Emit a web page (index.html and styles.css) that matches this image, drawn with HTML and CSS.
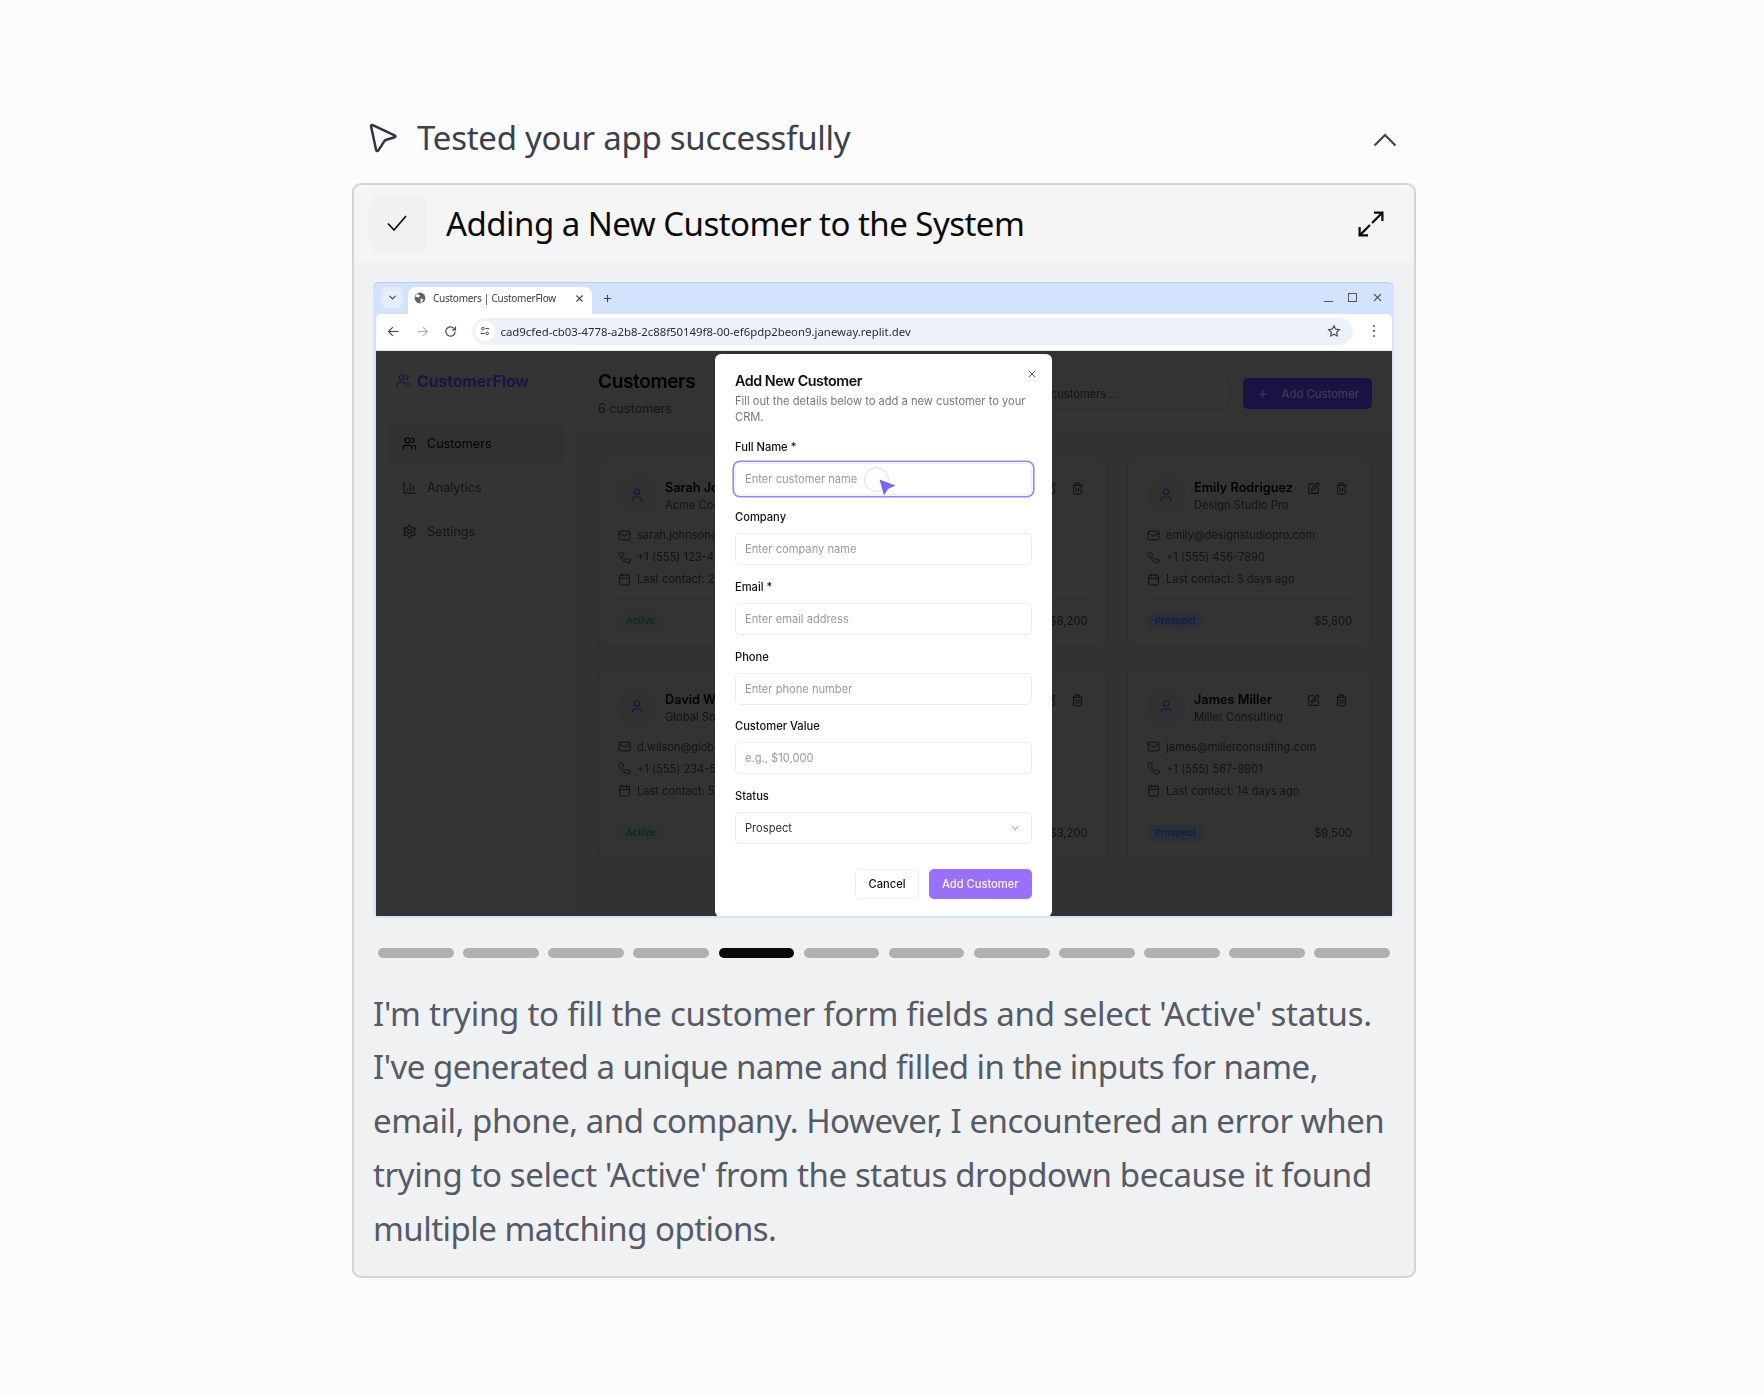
FILE: index.html
```html
<!DOCTYPE html>
<html lang="en">
<head>
<meta charset="utf-8">
<title>Tested your app successfully</title>
<link rel="stylesheet" href="styles.css">
</head>
<body>
<svg class="defs" width="0" height="0" aria-hidden="true">
  <symbol id="i-users" viewBox="0 0 24 24"><path d="M16 21v-2a4 4 0 0 0-4-4H6a4 4 0 0 0-4 4v2"/><circle cx="9" cy="7" r="4"/><path d="M22 21v-2a4 4 0 0 0-3-3.87"/><path d="M16 3.13a4 4 0 0 1 0 7.75"/></symbol>
  <symbol id="i-user" viewBox="0 0 24 24"><path d="M19 21v-2a4 4 0 0 0-4-4H9a4 4 0 0 0-4 4v2"/><circle cx="12" cy="7" r="4"/></symbol>
  <symbol id="i-chart" viewBox="0 0 24 24"><path d="M3 3v18h18"/><path d="M18 17V9"/><path d="M13 17V5"/><path d="M8 17v-3"/></symbol>
  <symbol id="i-gear" viewBox="0 0 24 24"><path d="M12.22 2h-.44a2 2 0 0 0-2 2v.18a2 2 0 0 1-1 1.73l-.43.25a2 2 0 0 1-2 0l-.15-.08a2 2 0 0 0-2.73.73l-.22.38a2 2 0 0 0 .73 2.73l.15.1a2 2 0 0 1 1 1.72v.51a2 2 0 0 1-1 1.74l-.15.09a2 2 0 0 0-.73 2.73l.22.38a2 2 0 0 0 2.73.73l.15-.08a2 2 0 0 1 2 0l.43.25a2 2 0 0 1 1 1.73V20a2 2 0 0 0 2 2h.44a2 2 0 0 0 2-2v-.18a2 2 0 0 1 1-1.73l.43-.25a2 2 0 0 1 2 0l.15.08a2 2 0 0 0 2.73-.73l.22-.39a2 2 0 0 0-.73-2.73l-.15-.08a2 2 0 0 1-1-1.74v-.5a2 2 0 0 1 1-1.74l.15-.09a2 2 0 0 0 .73-2.73l-.22-.38a2 2 0 0 0-2.73-.73l-.15.08a2 2 0 0 1-2 0l-.43-.25a2 2 0 0 1-1-1.73V4a2 2 0 0 0-2-2z"/><circle cx="12" cy="12" r="3"/></symbol>
  <symbol id="i-mail" viewBox="0 0 24 24"><rect x="2" y="4" width="20" height="16" rx="2"/><path d="m22 7-8.97 5.7a1.94 1.94 0 0 1-2.06 0L2 7"/></symbol>
  <symbol id="i-phone" viewBox="0 0 24 24"><path d="M22 16.92v3a2 2 0 0 1-2.18 2 19.79 19.79 0 0 1-8.63-3.07 19.5 19.5 0 0 1-6-6 19.79 19.79 0 0 1-3.07-8.67A2 2 0 0 1 4.11 2h3a2 2 0 0 1 2 1.72 12.84 12.84 0 0 0 .7 2.81 2 2 0 0 1-.45 2.11L8.09 9.91a16 16 0 0 0 6 6l1.27-1.27a2 2 0 0 1 2.11-.45 12.84 12.84 0 0 0 2.81.7A2 2 0 0 1 22 16.92z"/></symbol>
  <symbol id="i-cal" viewBox="0 0 24 24"><rect x="3" y="4" width="18" height="18" rx="2"/><path d="M16 2v4"/><path d="M8 2v4"/><path d="M3 10h18"/></symbol>
  <symbol id="i-pen" viewBox="0 0 24 24"><path d="M12 3H5a2 2 0 0 0-2 2v14a2 2 0 0 0 2 2h14a2 2 0 0 0 2-2v-7"/><path d="M18.375 2.625a1 1 0 0 1 3 3l-9.013 9.014a2 2 0 0 1-.853.505l-2.873.84a.5.5 0 0 1-.62-.62l.84-2.873a2 2 0 0 1 .506-.852z"/></symbol>
  <symbol id="i-trash" viewBox="0 0 24 24"><path d="M3 6h18"/><path d="M19 6v14c0 1-1 2-2 2H7c-1 0-2-1-2-2V6"/><path d="M8 6V4c0-1 1-2 2-2h4c1 0 2 1 2 2v2"/><path d="M10 11v6"/><path d="M14 11v6"/></symbol>
  <symbol id="i-plus" viewBox="0 0 24 24"><path d="M5 12h14"/><path d="M12 5v14"/></symbol>
  <symbol id="i-x" viewBox="0 0 24 24"><path d="M18 6 6 18"/><path d="m6 6 12 12"/></symbol>
  <symbol id="i-down" viewBox="0 0 24 24"><path d="m6 9 6 6 6-6"/></symbol>
</svg>

<main class="wrap">
  <header class="top">
    <div class="top-left">
      <svg class="pointer" viewBox="0 0 30 30"><path d="M3 3.2Q3.2 1.6 4.8 2.2L26.6 12.4Q28.4 13.4 26.6 14.2L18.4 16.8Q17 17.2 16.2 18.4L10.4 27.4Q9 28.9 8.2 27.2Z"/></svg>
      <h1 class="top-title">Tested your app successfully</h1>
    </div>
    <svg class="chev-up" viewBox="0 0 24 14"><path d="M1.5 12.5 12 2l10.5 10.5"/></svg>
  </header>

  <section class="card">
    <div class="card-head">
      <div class="check-tile"><svg class="check" viewBox="0 0 20 18"><path d="M1 9.5 7 16 19 2"/></svg></div>
      <h2 class="card-title">Adding a New Customer to the System</h2>
      <svg class="expand" viewBox="0 0 26 26"><path d="M16 1.6h8.4V10"/><path d="M24.4 1.6 14 12"/><path d="M1.6 16v8.4H10"/><path d="M1.6 24.4 12 14"/></svg>
    </div>

    <div class="card-body">
      <div class="shot">
        <div class="tabstrip">
          <span class="tab-drop"><svg class="ico tiny dark" viewBox="0 0 24 24"><path d="m6 9 6 6 6-6"/></svg></span>
          <div class="tab">
            <svg class="globe" viewBox="0 0 12 12"><circle cx="6" cy="6" r="5.4"/><path class="globe-land" d="M3 1.8 6 3.4 5 5.4 2.6 5 1.2 4.6ZM6.6 6.4 9.4 7.2 8 10.6 6.4 10.8Z"/></svg>
            <span class="tab-text">Customers | CustomerFlow</span>
            <svg class="ico tiny dark tab-x" viewBox="0 0 24 24"><path d="M18 6 6 18"/><path d="m6 6 12 12"/></svg>
          </div>
          <svg class="ico tiny dark tab-plus" viewBox="0 0 24 24"><path d="M5 12h14"/><path d="M12 5v14"/></svg>
          <div class="win">
            <span class="win-min"></span>
            <span class="win-max"></span>
            <svg class="ico tiny dark" viewBox="0 0 24 24"><path d="M19 5 5 19"/><path d="m5 5 14 14"/></svg>
          </div>
        </div>
        <div class="toolbar">
          <svg class="nav" viewBox="0 0 24 24"><path d="M20 12H5"/><path d="m11 5-7 7 7 7"/></svg>
          <svg class="nav off" viewBox="0 0 24 24"><path d="M4 12h15"/><path d="m13 5 7 7-7 7"/></svg>
          <svg class="nav" viewBox="0 0 24 24"><path d="M19.5 12a7.5 7.5 0 1 1-2.2-5.3L20 9.4"/><path d="M20 4v5.4h-5.4"/></svg>
          <div class="omni">
            <span class="tune"><svg viewBox="0 0 14 14"><circle cx="4" cy="3.6" r="1.8"/><path d="M7.5 3.6H13"/><circle cx="10" cy="10.4" r="1.8"/><path d="M1 10.4H6.5"/></svg></span>
            <span class="url">cad9cfed-cb03-4778-a2b8-2c88f50149f8-00-ef6pdp2beon9.janeway.replit.dev</span>
            <svg class="star" viewBox="0 0 24 24"><path d="m12 3 2.8 5.9 6.4.8-4.7 4.4 1.2 6.4L12 17.4l-5.7 3.1 1.2-6.4-4.7-4.4 6.4-.8z"/></svg>
          </div>
          <span class="kebab"><i></i><i></i><i></i></span>
        </div>

        <div class="viewport">
          <div class="app">
            <aside class="side">
              <div class="brand"><svg class="ico brand-ico"><use href="#i-users"/></svg><span>CustomerFlow</span></div>
              <nav class="side-nav">
                <div class="nav-item is-active"><svg class="ico"><use href="#i-users"/></svg>Customers</div>
                <div class="nav-item"><svg class="ico"><use href="#i-chart"/></svg>Analytics</div>
                <div class="nav-item"><svg class="ico"><use href="#i-gear"/></svg>Settings</div>
              </nav>
            </aside>
            <div class="content">
              <div class="content-head">
                <div>
                  <h3 class="page-title">Customers</h3>
                  <p class="page-sub">6 customers</p>
                </div>
                <div class="head-actions">
                  <div class="search">Search customers...</div>
                  <div class="btn-primary"><svg class="ico sm"><use href="#i-plus"/></svg>Add Customer</div>
                </div>
              </div>
              <div class="grid">
                <article class="cust">
                  <div class="cust-top"><span class="avatar"><svg class="ico"><use href="#i-user"/></svg></span>
                    <div class="who"><b>Sarah Johnson</b><small>Acme Corp</small></div>
                    <svg class="ico act"><use href="#i-pen"/></svg><svg class="ico act"><use href="#i-trash"/></svg></div>
                  <ul class="facts">
                    <li><svg class="ico fact"><use href="#i-mail"/></svg>sarah.johnson@acme.com</li>
                    <li><svg class="ico fact"><use href="#i-phone"/></svg>+1 (555) 123-4567</li>
                    <li><svg class="ico fact"><use href="#i-cal"/></svg>Last contact: 2 days ago</li>
                  </ul>
                  <div class="cust-foot"><span class="badge active">Active</span><span>$12,500</span></div>
                </article>
                <article class="cust">
                  <div class="cust-top"><span class="avatar"><svg class="ico"><use href="#i-user"/></svg></span>
                    <div class="who"><b>Michael Chen</b><small>TechStart Inc</small></div>
                    <svg class="ico act"><use href="#i-pen"/></svg><svg class="ico act"><use href="#i-trash"/></svg></div>
                  <ul class="facts">
                    <li><svg class="ico fact"><use href="#i-mail"/></svg>m.chen@techstart.io</li>
                    <li><svg class="ico fact"><use href="#i-phone"/></svg>+1 (555) 987-6543</li>
                    <li><svg class="ico fact"><use href="#i-cal"/></svg>Last contact: 1 week ago</li>
                  </ul>
                  <div class="cust-foot"><span class="badge active">Active</span><span>$8,200</span></div>
                </article>
                <article class="cust">
                  <div class="cust-top"><span class="avatar"><svg class="ico"><use href="#i-user"/></svg></span>
                    <div class="who"><b>Emily Rodriguez</b><small>Design Studio Pro</small></div>
                    <svg class="ico act"><use href="#i-pen"/></svg><svg class="ico act"><use href="#i-trash"/></svg></div>
                  <ul class="facts">
                    <li><svg class="ico fact"><use href="#i-mail"/></svg>emily@designstudiopro.com</li>
                    <li><svg class="ico fact"><use href="#i-phone"/></svg>+1 (555) 456-7890</li>
                    <li><svg class="ico fact"><use href="#i-cal"/></svg>Last contact: 3 days ago</li>
                  </ul>
                  <div class="cust-foot"><span class="badge prospect">Prospect</span><span>$5,800</span></div>
                </article>
                <article class="cust">
                  <div class="cust-top"><span class="avatar"><svg class="ico"><use href="#i-user"/></svg></span>
                    <div class="who"><b>David Wilson</b><small>Global Solutions</small></div>
                    <svg class="ico act"><use href="#i-pen"/></svg><svg class="ico act"><use href="#i-trash"/></svg></div>
                  <ul class="facts">
                    <li><svg class="ico fact"><use href="#i-mail"/></svg>d.wilson@globalsolutions.com</li>
                    <li><svg class="ico fact"><use href="#i-phone"/></svg>+1 (555) 234-5678</li>
                    <li><svg class="ico fact"><use href="#i-cal"/></svg>Last contact: 5 days ago</li>
                  </ul>
                  <div class="cust-foot"><span class="badge active">Active</span><span>$15,000</span></div>
                </article>
                <article class="cust">
                  <div class="cust-top"><span class="avatar"><svg class="ico"><use href="#i-user"/></svg></span>
                    <div class="who"><b>Lisa Thompson</b><small>Retail Plus</small></div>
                    <svg class="ico act"><use href="#i-pen"/></svg><svg class="ico act"><use href="#i-trash"/></svg></div>
                  <ul class="facts">
                    <li><svg class="ico fact"><use href="#i-mail"/></svg>lisa@retailplus.com</li>
                    <li><svg class="ico fact"><use href="#i-phone"/></svg>+1 (555) 345-6789</li>
                    <li><svg class="ico fact"><use href="#i-cal"/></svg>Last contact: 2 weeks ago</li>
                  </ul>
                  <div class="cust-foot"><span class="badge active">Active</span><span>$3,200</span></div>
                </article>
                <article class="cust">
                  <div class="cust-top"><span class="avatar"><svg class="ico"><use href="#i-user"/></svg></span>
                    <div class="who"><b>James Miller</b><small>Miller Consulting</small></div>
                    <svg class="ico act"><use href="#i-pen"/></svg><svg class="ico act"><use href="#i-trash"/></svg></div>
                  <ul class="facts">
                    <li><svg class="ico fact"><use href="#i-mail"/></svg>james@millerconsulting.com</li>
                    <li><svg class="ico fact"><use href="#i-phone"/></svg>+1 (555) 567-8901</li>
                    <li><svg class="ico fact"><use href="#i-cal"/></svg>Last contact: 14 days ago</li>
                  </ul>
                  <div class="cust-foot"><span class="badge prospect">Prospect</span><span>$9,500</span></div>
                </article>
              </div>
            </div>
          </div>
          <div class="modal">
            <svg class="ico modal-x"><use href="#i-x"/></svg>
            <h4 class="modal-title">Add New Customer</h4>
            <p class="modal-desc">Fill out the details below to add a new customer to your CRM.</p>
            <div class="field"><label class="lab">Full Name *</label><div class="inp is-focus">Enter customer name</div></div>
            <div class="field"><label class="lab">Company</label><div class="inp">Enter company name</div></div>
            <div class="field"><label class="lab">Email *</label><div class="inp">Enter email address</div></div>
            <div class="field"><label class="lab">Phone</label><div class="inp">Enter phone number</div></div>
            <div class="field"><label class="lab">Customer Value</label><div class="inp">e.g., $10,000</div></div>
            <div class="field"><label class="lab">Status</label><div class="inp is-select">Prospect<svg class="ico sm"><use href="#i-down"/></svg></div></div>
            <div class="modal-foot"><span class="btn-cancel">Cancel</span><span class="btn-add">Add Customer</span></div>
          </div>
          <div class="cursor">
            <span class="cursor-ring"></span>
            <svg class="cursor-arrow" viewBox="0 0 20 20"><path d="M1.5 1.5 17.5 7.5 10 11 6 17.5Z"/></svg>
          </div>
        </div>
      </div>

      <div class="steps">
        <span class="step"></span><span class="step"></span><span class="step"></span><span class="step"></span>
        <span class="step is-on"></span><span class="step"></span><span class="step"></span><span class="step"></span>
        <span class="step"></span><span class="step"></span><span class="step"></span><span class="step"></span>
      </div>

      <p class="note"><span class="line l1">I'm trying to fill the customer form fields and select 'Active' status.</span><span class="line">I've generated a unique name and filled in the inputs for name,</span><span class="line l3">email, phone, and company. However, I encountered an error when</span><span class="line l4">trying to select 'Active' from the status dropdown because it found</span><span class="line">multiple matching options.</span></p>
    </div>
  </section>
</main>
</body>
</html>
```
FILE: styles.css
```css
* { box-sizing: border-box; }
html, body { margin: 0; padding: 0; }
body {
  background: #fcfcfc;
  min-height: 1394px;
  font-family: "Noto Sans", "Open Sans", sans-serif;
  overflow: hidden;
}
.defs { position: absolute; }
.wrap { width: 1064px; margin-left: 352px; padding-top: 114px; }

/* top line */
.top { display: flex; align-items: center; justify-content: space-between; height: 48px; margin-bottom: 21px; padding: 0 19px 0 16px; }
.top-left { display: flex; align-items: center; gap: 19px; }
.pointer { width: 30px; height: 30px; fill: none; stroke: #2f3542; stroke-width: 2.5; stroke-linejoin: round; }
.top-title { margin: 0; font-size: 33px; font-weight: 400; letter-spacing: -.26px; color: #3b404c; line-height: 48px; white-space: nowrap; }
.chev-up { width: 24px; height: 14px; margin-top: 3px; fill: none; stroke: #3f4450; stroke-width: 2.2; }

/* card */
.card { border: 2px solid #d4d4d4; border-radius: 9px; background: #f0f1f3; height: 1095px; overflow: hidden; }
.card-head { display: flex; align-items: center; height: 77px; padding: 0 30px 0 15px; background: #f5f5f5; }
.check-tile { width: 58px; height: 58px; border-radius: 9px; background: #f0f1f3; display: flex; align-items: center; justify-content: center; flex: none; }
.check { width: 20px; height: 18px; margin: -2px 2px 0 0; fill: none; stroke: #111; stroke-width: 1.7; }
.card-title { flex: 1; margin: 0 0 0 19px; font-size: 33px; font-weight: 400; letter-spacing: -.53px; color: #0a0a0a; white-space: nowrap; }
.expand { width: 26px; height: 26px; fill: none; stroke: #0a0a0a; stroke-width: 2.2; }
.card-body { padding: 20px 20px 20px 19px; }

/* screenshot */
.shot { height: 636px; border-radius: 6px; background: #d3e3fd; padding: 0 2.5px 2px 3px; display: flex; flex-direction: column; filter: blur(.35px); font-family: Inter, sans-serif; box-shadow: inset 0 1px 0 #b9cdee; }
.tabstrip { height: 32px; display: flex; align-items: flex-end; flex: none; position: relative; }
.tab-drop { width: 22px; height: 21px; margin: 0 5px 6px 5px; border-radius: 7px; background: #e3edfc; display: flex; align-items: center; justify-content: center; }
.ico.tiny { width: 11px; height: 11px; }
.ico.dark { stroke: #444; stroke-width: 2.4; }
.tab { width: 184px; height: 27px; background: #fff; border-radius: 8px 8px 0 0; display: flex; align-items: center; padding: 0 5px 5px 6px; }
.globe { width: 12px; height: 12px; flex: none; margin-right: 7px; }
.globe circle { fill: #5f6368; }
.globe-land { fill: #fff; }
.tab-text { flex: 1; font: 400 10px "Noto Sans", sans-serif; letter-spacing: -.26px; color: #3c4043; white-space: nowrap; }
.tab-x { flex: none; margin-right: 2px; }
.tab-plus { margin: 0 0 10px 10px; }
.win { margin-left: auto; display: flex; align-items: center; gap: 15px; padding: 0 8.5px 11px 0; }
.win-min { width: 9px; height: 1.6px; margin-top: 8px; background: #555; }
.win-max { width: 9px; height: 9px; border: 1.6px solid #555; }
.toolbar { height: 37px; flex: none; background: #fff; border-radius: 5px 5px 0 0; display: flex; align-items: center; padding: 0 13px 2px 10px; gap: 13.5px; border-bottom: 1px solid #e4e6ea; }
.nav { width: 15px; height: 15px; fill: none; stroke: #4a4d52; stroke-width: 1.9; flex: none; }
.nav.off { stroke: #aab0b8; }
.omni { flex: 1; height: 27px; border-radius: 14px; background: #edf2fa; display: flex; align-items: center; padding: 0 12.5px 0 3px; }
.tune { width: 20px; height: 20px; border-radius: 50%; background: #fff; display: flex; align-items: center; justify-content: center; flex: none; }
.tune svg { width: 10px; height: 10px; fill: none; stroke: #444; stroke-width: 1.4; }
.url { flex: 1; margin-left: 6px; font: 400 11.38px "Noto Sans", sans-serif; color: #2a2c30; white-space: nowrap; }
.star { width: 14px; height: 14px; fill: none; stroke: #4a4d52; stroke-width: 2; }
.kebab { width: 3px; margin: 0 3px 0 6px; display: flex; flex-direction: column; gap: 2.4px; }
.kebab i { width: 2.4px; height: 2.4px; border-radius: 50%; background: #4a4d52; }

/* page under the dialog: painted in its dimmed colours */
.viewport { flex: 1; position: relative; overflow: hidden; background: #333; }
.app { display: flex; height: 100%; color: #0a0a0a; }
.ico { width: 14px; height: 14px; fill: none; stroke: currentColor; stroke-width: 2; stroke-linecap: round; stroke-linejoin: round; flex: none; }
.ico.sm { width: 12px; height: 12px; }

/* app sidebar */
.side { width: 202px; flex: none; background: #343434; border-right: 1px solid #2f2f2f; }
.brand { height: 60px; padding: 0 0 0 20px; display: flex; align-items: center; gap: 6px; font-size: 16px; font-weight: 700; letter-spacing: -.2px; color: #1a1544; border-bottom: 1px solid #303030; }
.brand-ico { width: 15px; height: 15px; stroke-width: 1.8; }
.side-nav { padding: 13px 12px; display: flex; flex-direction: column; gap: 6.4px; }
.nav-item { height: 38px; padding: 0 14px; border-radius: 7px; display: flex; align-items: center; gap: 10px; font-size: 12.6px; color: #131315; }
.nav-item.is-active { background: #313131; color: #040404; }
.nav-item .ico { width: 15px; height: 15px; }

/* app main */
.content { flex: 1; min-width: 0; background: #323232; }
.content-head { height: 86px; padding: 17px 20px 0; display: flex; justify-content: space-between; background: #333; border-bottom: 1px solid #303030; }
.page-title { margin: 0; font-size: 19.1px; font-weight: 600; letter-spacing: -.4px; line-height: 26px; color: #020202; }
.page-sub { margin: 6px 0 0; font-size: 12.6px; line-height: 18px; color: #131315; }
.head-actions { display: flex; gap: 13px; height: 31px; margin-top: 10px; }
.search { width: 250px; height: 31px; padding: 0 0 0 30px; border: 1px solid #303030; border-radius: 5px; font-size: 11.2px; line-height: 30px; color: #131315; }
.btn-primary { width: 129px; height: 31px; border-radius: 5px; background: #1a1245; color: #3e3b55; font-size: 11.3px; font-weight: 500; display: flex; align-items: center; padding-left: 14px; gap: 13px; }
.grid { padding: 20px 20px 0; display: grid; grid-template-columns: repeat(3, 245px); grid-auto-rows: 191px; column-gap: 19.5px; row-gap: 20.5px; }
.cust { padding: 18px 19px 0; border: 1px solid #303030; border-radius: 8px; background: #333; }
.cust-top { display: flex; height: 42px; }
.avatar { width: 38px; height: 38px; border-radius: 50%; background: #313132; color: #1a1544; display: flex; align-items: center; justify-content: center; flex: none; margin-right: 9px; }
.avatar .ico { width: 16px; height: 16px; stroke-width: 1.8; }
.who { flex: 1; min-width: 0; display: flex; flex-direction: column; white-space: nowrap; }
.who b { font-size: 12.7px; line-height: 18px; font-weight: 600; color: #020202; margin-top: 3px; }
.who small { font-size: 11.2px; line-height: 16px; color: #131315; }
.act { width: 13px; height: 13px; margin: 6px 0 0 15px; color: #111; }
.act:last-child { margin-right: 4px; }
.facts { list-style: none; margin: 6px 0 0; padding: 0; font-size: 11.1px; color: #131315; }
.facts li { height: 22px; display: flex; align-items: center; gap: 6px; white-space: nowrap; }
.fact { width: 13px; height: 13px; stroke-width: 1.8; color: #111; }
.cust-foot { margin-top: 9px; padding-top: 13px; border-top: 1px solid #2f2f2f; display: flex; align-items: center; justify-content: space-between; font-size: 11.2px; color: #131315; }
.badge { height: 16px; padding: 0 8px; border-radius: 8px; font-size: 9.6px; line-height: 16px; font-weight: 500; }
.badge.active { background: #2c342f; color: #06291a; }
.badge.prospect { background: #2b3038; color: #0b1c45; }

/* dialog */
.modal { position: absolute; left: 339px; top: 3px; width: 337px; height: 563px; padding: 17.5px 20px 0; background: #fff; border-radius: 6px; color: #0b0b0b; }
.modal-x { position: absolute; right: 14px; top: 14px; width: 12px; height: 12px; color: #555; }
.modal-title { margin: 0; font-size: 14.3px; line-height: 18px; font-weight: 600; letter-spacing: -.45px; color: #111; }
.modal-desc { margin: 3px 0 0; font-size: 11.15px; line-height: 16px; color: #777; }
.field { margin-top: 14.8px; height: 59px; }
.field + .field { margin-top: 10.8px; }
.lab { display: block; height: 19px; font-size: 11.15px; font-weight: 500; line-height: 16px; color: #111; }
.inp { height: 32px; margin-top: 5px; padding: 0 9px; border: 1px solid #ececec; border-radius: 5px; background: #fff; display: flex; align-items: center; font-size: 11.15px; color: #9a9a9a; }
.inp.is-focus { border-color: #f1effb; box-shadow: 0 0 0 1px #f6f5fd, 0 0 0 2.6px #9a83f5; }
.inp.is-select { color: #333; justify-content: space-between; }
.inp.is-select .ico { color: #888; margin-right: 1px; }
.modal-foot { display: flex; justify-content: flex-end; gap: 9.5px; margin-top: 21.5px; }
.btn-cancel, .btn-add { height: 30px; border-radius: 5px; display: flex; align-items: center; justify-content: center; font-size: 11.15px; font-weight: 500; }
.btn-cancel { width: 64px; border: 1px solid #ededed; color: #111; background: #fff; }
.btn-add { width: 103.5px; background: #9871f8; color: #f6f2ff; }

/* automation cursor */
.cursor { position: absolute; left: 488px; top: 115px; width: 32px; height: 32px; }
.cursor-ring { position: absolute; left: 0; top: 1px; width: 25px; height: 25px; border: 1.5px solid #dcdce4; border-radius: 50%; }
.cursor-arrow { position: absolute; left: 14px; top: 12px; width: 20px; height: 20px; fill: #7a66ff; filter: drop-shadow(0 0 2px #fff); }

/* step indicators */
.steps { margin: 30px 4px 0 5px; display: flex; gap: 9.5px; }
.step { flex: 1; height: 10px; border-radius: 5px; background: #b0b0b0; }
.step.is-on { background: #0a0a0a; }

.note { margin: 28.5px 0 0; font-size: 33px; line-height: 53.75px; letter-spacing: -.53px; color: #555a66; white-space: nowrap; }
.line { display: block; }
.l1 { letter-spacing: -.25px; }
.l3 { letter-spacing: -.48px; }
.l4 { letter-spacing: -.38px; }
```
